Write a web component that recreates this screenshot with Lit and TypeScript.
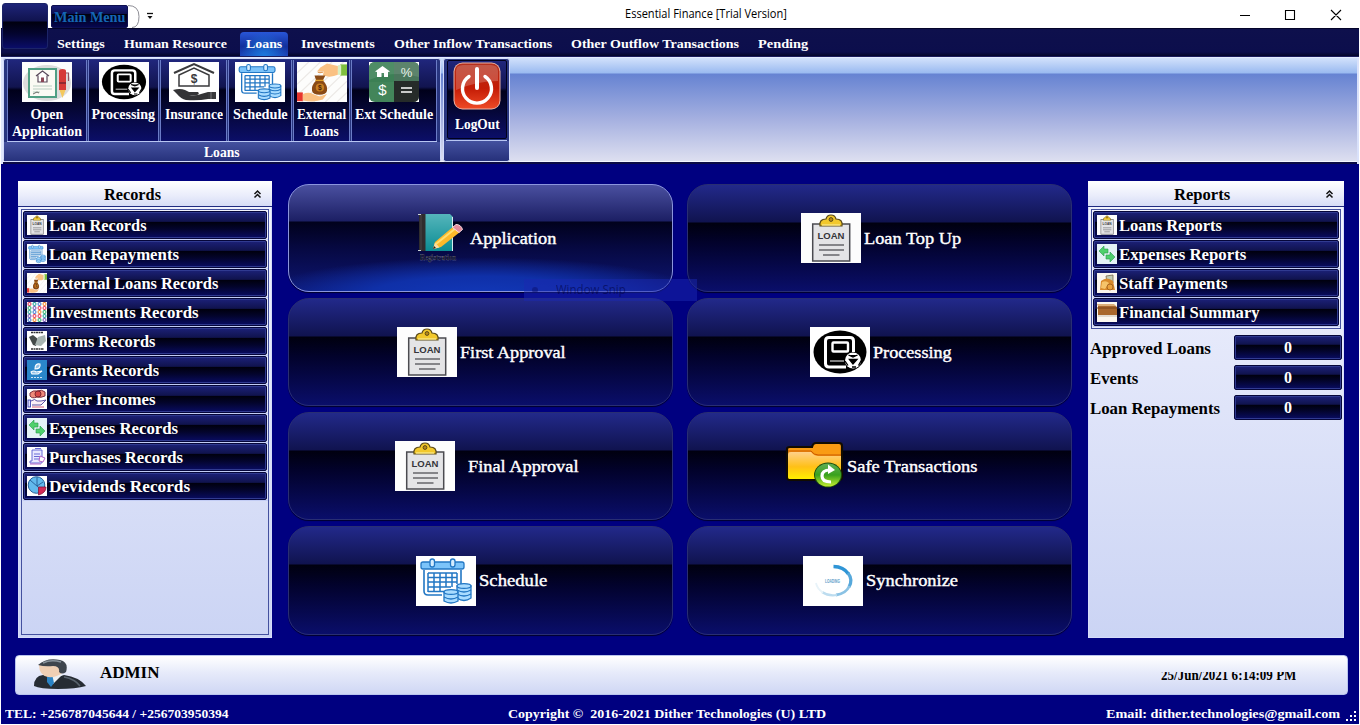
import { LitElement, html, css, svg, nothing } from "lit";
import { customElement, property } from "lit/decorators.js";

/* A line of text stretched horizontally to a given measure. */
@customElement("fit-label")
class FitLabel extends LitElement {
  @property() text = "";
  @property({ type: Number }) w = 0;
  static styles = css`
    :host { display: block; flex: none; white-space: nowrap; }
    .t { display: inline-block; transform-origin: 0 50%; white-space: pre; }
  `;
  render() {
    return html`<span class="t">${this.text}</span>`;
  }
  updated() {
    const t = this.renderRoot.querySelector(".t") as HTMLElement;
    this.style.width = this.w + "px";
    const natural = t.offsetWidth;
    if (natural) t.style.transform = `scaleX(${this.w / natural})`;
  }
}

const calendar = svg`
  <rect width="60" height="50" fill="#fff"/>
  <path d="M8 14V35q0 4 4 4H26M45 14V28" fill="none" stroke="#2277c4" stroke-width="1.6"/>
  <rect x="5" y="6" width="43" height="7" rx="2" fill="#7cc4fa" stroke="#2277c4" stroke-width="1.3"/>
  <rect x="14" y="3" width="4.500" height="8" rx="2.200" fill="#d5edff" stroke="#2277c4" stroke-width="1.300"/>
  <rect x="34.500" y="3" width="4.500" height="8" rx="2.200" fill="#d5edff" stroke="#2277c4" stroke-width="1.300"/>
  <path d="M12 17H41M12 21.500H41M12 26H41M12 31H35M12 35.500H28M12 17V36M18 17V36M24 17V36M30 17V31M36 17V31M41 17V28" stroke="#2277c4" stroke-width="1.500" fill="none"/>
  <g fill="#a9dcff" stroke="#2277c4" stroke-width="1.300">
    <path d="M41 30V42q7 5 14 0V30z"/><ellipse cx="48" cy="30" rx="7" ry="2.400"/>
    <path d="M41 34q7 4 14 0M41 38q7 4 14 0" fill="none"/>
    <path d="M28 36V45q7 4 14 0V36z" /><ellipse cx="35" cy="36" rx="7" ry="2.400"/>
    <path d="M28 41q7 4 14 0" fill="none"/>
  </g>`;

const clip = svg`
  <rect width="60" height="50" fill="#fdfdfd"/>
  <rect x="11.700" y="11" width="37" height="37" fill="#e4e4e6" stroke="#4b4b50" stroke-width="1.500"/>
  <path d="M19 13q-1-7 6-7q1-4 5-4t5 4q7 0 6 7z" fill="#f2c82c" stroke="#5b4a18" stroke-width="1.200"/>
  <path d="M21 12h18" stroke="#fbe98b" stroke-width="1.300"/>
  <circle cx="30" cy="6.500" r="1.900" fill="#b98a16" stroke="#5b4a18" stroke-width="1"/>
  <text x="30" y="26" text-anchor="middle" textLength="27" lengthAdjust="spacingAndGlyphs" font-family="Liberation Sans" font-weight="700" font-size="8.300" fill="#35353a">LOAN</text>
  <path d="M18 32H43M18 37H43M22 42H38.500" stroke="#66666b" stroke-width="1.600"/>`;

const processing = svg`
  <rect width="60" height="50" fill="#fff"/>
  <ellipse cx="30" cy="25" rx="26.500" ry="21.500" fill="#000"/>
  <path d="M36 40H19q-3.500 0-3.500-3.500V14q0-3.500 3.500-3.500H40q3.500 0 3.500 3.500V25" fill="none" stroke="#fff" stroke-width="3"/>
  <rect x="22.500" y="15.500" width="15.500" height="9" rx="1" fill="none" stroke="#fff" stroke-width="2.400"/>
  <path d="M20 34H34" stroke="#fff" stroke-width="1"/>
  <circle cx="43" cy="33.500" r="8" fill="#fff"/>
  <path d="M38.500 28l4.500 2 4.500-2M39.500 32.500l3.500 4.500 4-4.500zM35 34l3 4.500M51.500 33l-3 5.500M42 40h4" stroke="#000" stroke-width="1.300" fill="#000"/>`;

const extLoans = svg`
  <rect width="60" height="50" fill="#fdfdfc"/>
  <path d="M0 14L14 0M0 28L28 0M0 42L42 0M6 50L56 0M20 50L60 10M34 50L60 24M48 50L60 38" stroke="#ece9e6" stroke-width="1.500"/>
  <rect x="52" y="3" width="8" height="14" fill="#7fbf3f"/><rect x="49" y="4" width="4" height="12" fill="#d8efc3"/>
  <path d="M49 5L36 2 28 7 24 12h8l-1 5q10 3 18-1z" fill="#fac183"/>
  <path d="M25 13h6" stroke="#e29d5d" stroke-width="1.500"/>
  <path d="M21 17h13l-3 6q6 6 5 13-1 5-9 5t-9-5q-1-7 5-13z" fill="#8a4a16"/>
  <path d="M22 23h10" stroke="#e2a22c" stroke-width="1.600"/>
  <circle cx="27.500" cy="32" r="5" fill="#c97f20"/>
  <text x="27.500" y="35" font-size="8" text-anchor="middle" font-family="Liberation Sans" font-weight="700" fill="#4c250a">$</text>
  <rect x="0" y="38" width="7" height="11" fill="#e8352c"/>
  <path d="M7 40q7-3 12 0l8 3 9-3-5 7q-10 4-24 1z" fill="#fac183"/>`;

const expenses = svg`
  <rect width="20" height="20" fill="#e4f3f6"/>
  <path d="M2 7l5-5v3h4v4H7v3z" fill="#4fd06c" stroke="#269b4b" stroke-width=".6"/>
  <path d="M18 13l-5-5v3H9v4h4v3z" fill="#4fd06c" stroke="#269b4b" stroke-width=".6"/>`;

const icons: Record<string, [string, unknown]> = {
  calendar: ["0 0 60 50", calendar],
  clip: ["0 0 60 50", clip],
  processing: ["0 0 60 50", processing],
  external: ["0 0 60 50", extLoans],
  expenses: ["0 0 20 20", expenses],
  open: ["0 0 50 40", svg`
    <rect width="50" height="40" fill="#fdfdfd"/>
    <ellipse cx="25" cy="21" rx="24" ry="18" fill="#dcdcdc"/>
    <rect x="7" y="7" width="27" height="28" fill="#fbfaf4" stroke="#4f9f84" stroke-width="2"/>
    <path d="M14 14l6.500-5 6.500 5M16 13.500V20h9V13.500" fill="#fff" stroke="#5a4a5c" stroke-width="1.200"/>
    <rect x="19" y="15.500" width="3" height="4.500" fill="#8a4555"/>
    <path d="M11 24H30M11 27H30M11 30H18" stroke="#a9c4b6" stroke-width=".8"/>
    <path d="M11 32l4-2 2 1" stroke="#333" stroke-width=".7" fill="none"/>
    <path d="M37 9q0-2 3.500-2T44 9V28H37z" fill="#d63a38"/><path d="M44 11h2.500v8" fill="none" stroke="#8f5560" stroke-width="1.200"/>
    <path d="M37 21h7" stroke="#782430" stroke-width="1.500"/><path d="M37.500 28h6l-3 8z" fill="#f4c85c"/>`],
  insurance: ["0 0 50 40", svg`
    <rect width="50" height="40" fill="#fff"/>
    <path d="M5 11L25 2 45 11" fill="none" stroke="#3a3a3c" stroke-width="2"/>
    <path d="M10 24V13L25 6l15 7v11z" fill="none" stroke="#3a3a3c" stroke-width="1.500"/>
    <text x="25" y="21" text-anchor="middle" font-size="12" font-family="Liberation Sans" font-weight="700" fill="#3a3a3c">$</text>
    <path d="M4 28q7-2 12 0l4 2h9q2 2-1 3h-8q8 1 12-1l7-2v7q-10 2-22 1-5-1-9-6z" fill="#343436"/>
    <path d="M39 30h8v7h-8z" fill="#3a3a3c"/><path d="M42 30v7" stroke="#999" stroke-width=".7"/>`],
  calc: ["0 0 50 40", svg`
    <rect width="50" height="40" fill="#fff"/>
    <rect width="50" height="40" rx="6" fill="#43855a"/>
    <path d="M0 6q0-6 6-6H25V20H0z" fill="#3c8055"/><path d="M25 0H44q6 0 6 6V20H25z" fill="#4a765c"/>
    <path d="M25 19H50V34q0 6-6 6H25z" fill="#262b29"/>
    <path d="M0 6q0-6 6-6H44q6 0 6 6V15Q25 8 0 18z" fill="#fff" opacity=".1"/>
    <path d="M6 9.500L13.500 4 21 9.500 19 10V15H15V11H12.500V15H8V10z" fill="#fff"/>
    <text x="37.500" y="14.500" text-anchor="middle" font-size="13" font-weight="400" font-family="Liberation Sans" fill="#e7f1ea">%</text>
    <text x="13.500" y="33" text-anchor="middle" font-size="15" font-weight="400" font-family="Liberation Sans" fill="#fff">$</text>
    <path d="M32 26H43M32 30H43" stroke="#fff" stroke-width="1.600"/>`],
  power: ["0 0 48 48", svg`
    <rect x=".5" y=".5" width="47" height="47" rx="9" fill="#e9b3a6"/>
    <rect x="1.500" y="1.500" width="45" height="45" rx="8" fill="url(#pw)"/>
    <path d="M3 9q0-6 7-6H38q7 0 7 6v10Q24 19 3 28z" fill="#fff" opacity=".2"/>
    <path d="M16 14.500a14.500 14.500 0 1 0 16 0" fill="none" stroke="#fff" stroke-width="3.400" stroke-linecap="round"/>
    <path d="M24 7V26" stroke="#fff" stroke-width="4" stroke-linecap="round"/>
    <defs><linearGradient id="pw" x1="0" x2="0" y1="0" y2="1"><stop offset="0" stop-color="#b5301c"/><stop offset=".55" stop-color="#c41c06"/><stop offset="1" stop-color="#ee4a26"/></linearGradient></defs>`],
  book: ["0 0 60 50", svg`
    <rect x="9" y="1" width="7" height="37" fill="#302d2e"/><path d="M11 1.500v36" stroke="#4b4647" stroke-width="1"/><path d="M8 1.500h3M8 37.500h3" fill="none" stroke="#c9d2d4" stroke-width="1"/>
    <path d="M15.500 1H40l3 3V38H15.500z" fill="url(#bk)"/><path d="M42.500 4V38" stroke="#d6ecee" stroke-width="1"/>
    <path d="M23 36l2-7L44 13l6 6-19 15z" fill="#fdb92a"/><path d="M26 31L46 15" stroke="#ffdf70" stroke-width="2"/>
    <path d="M42.500 14.500l3.500-3q5 0 6.500 5l-3.500 3z" fill="#e68b9b" stroke="#f6d9dd" stroke-width="1"/>
    <path d="M23 36l2-6.500 4.500 5z" fill="#f8dca5"/><path d="M23 36l1-3 2 2z" fill="#222"/>
    <text x="28" y="47" text-anchor="middle" textLength="36" lengthAdjust="spacingAndGlyphs" font-size="9" font-family="Liberation Serif" font-weight="700" fill="#000" stroke="#88a" stroke-width=".25">Registration</text>
    <defs><linearGradient id="bk" x1="0" x2="0" y1="0" y2="1"><stop offset="0" stop-color="#55b5bb"/><stop offset="1" stop-color="#0b8d94"/></linearGradient></defs>`],
  folder: ["0 0 60 50", svg`
    <g stroke="#120c00" stroke-width="2.200"><path d="M3 8q0-2 3-2H28q1-4 4-4H55q3 0 3 3V36q0 3-3 3H6q-3 0-3-3z" fill="#f99b13"/></g>
    <path d="M4 14q0-3 3-3H27q3 4 7 4H57V36q0 2-2 2H6q-2 0-2-2z" fill="url(#fd)"/>
    <path d="M4 10H27q3 4 7 4H57" stroke="#c85600" stroke-width="1" fill="none"/>
    <ellipse cx="44" cy="34" rx="14" ry="12.500" fill="#1d4f0c"/><ellipse cx="44" cy="34" rx="13" ry="11.500" fill="url(#gr)"/>
    <path d="M47 41q-9 0-9-6 0-6 8-6" fill="none" stroke="#fff" stroke-width="3.200"/><path d="M44 23.500l7 5.500-7 4z" fill="#fff"/>
    <defs><linearGradient id="fd" x1="0" x2="0" y1="0" y2="1"><stop offset="0" stop-color="#ffd08a"/><stop offset=".55" stop-color="#ffc016"/><stop offset="1" stop-color="#fff000"/></linearGradient>
    <linearGradient id="gr" x1="0" x2="0" y1="0" y2="1"><stop offset="0" stop-color="#5faf57"/><stop offset=".5" stop-color="#39a11d"/><stop offset="1" stop-color="#c4ee32"/></linearGradient></defs>`],
  loading: ["0 0 60 50", svg`
    <rect width="60" height="50" fill="#fff"/>
    <path d="M30.500 10.500A17.500 14.500 0 0 1 45.500 18" fill="none" stroke="#2f95d6" stroke-width="3.400"/>
    <path d="M45 17A17.500 14.500 0 0 1 46 31" fill="none" stroke="#56a8db" stroke-width="3.200"/>
    <path d="M46.500 30A17.500 14.500 0 0 1 33 39" fill="none" stroke="#8ac2e4" stroke-width="2.800"/>
    <path d="M34 39A17.500 14.500 0 0 1 19 36" fill="none" stroke="#bcdcef" stroke-width="2.200"/>
    <path d="M20 36.500A17.500 14.500 0 0 1 13 27" fill="none" stroke="#e8f3f9" stroke-width="1.800"/>
    <text x="29.500" y="27" text-anchor="middle" textLength="15" lengthAdjust="spacingAndGlyphs" font-size="5" font-family="Liberation Sans" font-weight="700" fill="#5b9cc8">LOADING</text>`],
  invest: ["0 0 20 20", svg`
    <rect width="20" height="20" fill="#fff"/>
    ${[0, 1, 2, 3, 4].map((r) => [0, 1, 2, 3].map((c) => svg`<circle cx=${2.5 + c * 5} cy=${2 + r * 4} r="1.500" fill="none" stroke-width="1.100" stroke=${["#e5405f", "#7a5bb8", "#f08a35", "#2ea6a0", "#e5405f", "#3bb273", "#4a7fd0"][(r * 5 + c * 3) % 7]}/>`))}`],
  forms: ["0 0 20 20", svg`
    <rect width="20" height="20" fill="#fff"/>
    <path d="M4 1.500H16" stroke="#333" stroke-width="1.600" stroke-dasharray="2 .5"/>
    <path d="M2 6l4-2 5 4-2 7-3-1z" fill="#444a49"/><path d="M8 14l3-8 7-2 1 6-5 5z" fill="#a9b5b2"/>
    <path d="M4 18H17" stroke="#333" stroke-width="1.600" stroke-dasharray="2 .5"/>`],
  grants: ["0 0 20 20", svg`
    <rect width="20" height="20" fill="#2a86c9"/>
    <path d="M8 9q6 0 5-5-5-1-5 5zM4 12q3-2 5 0l6-1-4 3H5z" fill="#8fc0e6" stroke="#fff" stroke-width="1.100"/>
    <path d="M4 17.500H16" stroke="#cfe5f5" stroke-width="1" stroke-dasharray="2 1"/>`],
  incomes: ["0 0 20 20", svg`
    <rect width="20" height="20" fill="#fff"/>
    <path d="M3 4q3-3 7-2 5-2 8 1v4q-4 2-8 1-5 2-7-1z" fill="#ef8a7a" stroke="#7e3140" stroke-width="1"/>
    <circle cx="11" cy="5" r="3" fill="#d94848" stroke="#7e2630"/>
    <rect x="1" y="11" width="2.500" height="7" fill="#dfe0ff" stroke="#4347b5" stroke-width=".9"/>
    <path d="M4 12q4-3 6 0h4l5-1-5 5H5" fill="#fbeef6" stroke="#4b3f9a" stroke-width=".9"/><path d="M5 18h12" stroke="#d55b76"/>`],
  purchases: ["0 0 20 20", svg`
    <rect width="20" height="20" fill="#fff"/>
    <path d="M5 3H15V16H3V14H5zM8 1.500h6M7 7h6M7 9.500h6M7 12h5" fill="#e9e9ff" stroke="#5a5bd0" stroke-width=".9"/>
    <path d="M3 17H14M13 9l5 2-2 4-4-1z" fill="#fff" stroke="#b465c8" stroke-width="1"/>`],
  pie: ["0 0 20 20", svg`
    <rect width="20" height="20" fill="#fff"/>
    <circle cx="9.500" cy="9" r="8.300" fill="#62b9ec" stroke="#235c94" stroke-width="1"/>
    <path d="M3 4L11 11M10 1V10L16 6" stroke="#235c94" stroke-width=".9" fill="none"/>
    <path d="M11.500 11h7.500q0 6-7.500 8z" fill="#d32b57" stroke="#85183a" stroke-width=".8"/>`],
  staff: ["0 0 20 20", svg`
    <rect width="20" height="20" fill="#fbf6ee"/>
    <path d="M9 3l7-1v8H10z" fill="#c3cbb4" stroke="#7c6a4c" stroke-width=".8"/>
    <path d="M4 8q6-5 12 0l2 9H3z" fill="#d98a2b"/><path d="M5 9q4-2 7 1l-4 6-4-1z" fill="#f6c46a"/><circle cx="13" cy="14" r="3" fill="#eaa13c" stroke="#99591a" stroke-width=".8"/>`],
  box: ["0 0 20 20", svg`
    <rect width="20" height="20" fill="#fbf7f0"/>
    <path d="M1 3H17l3 2V13H1z" fill="#a9672c"/><path d="M0 2H17l2 2H1z" fill="#dcae78"/><path d="M0 6H20" stroke="#7a4317" stroke-width="1"/><path d="M1 14H20" stroke="#c9bdb0" stroke-width="1"/>`],
  user: ["0 0 54 30", svg`
    <path d="M1 27Q1 17 10 16l12 3 9-3q15 2 22 11-10 3-28 3-18 0-24-3z" fill="#262c33"/>
    <path d="M12 15l8 10 10-10-8-2z" fill="#eceff2"/><path d="M14 16l5-1 2 9-3 4-4-5z" fill="#2a83c4"/>
    <path d="M6 6q10-6 22-2 5 5 1 10-6 5-14 4-9-2-9-12z" fill="#efcfb4"/>
    <path d="M5 6Q14-2 27 1q9 2 6 12-4 3-7 0 1-6-6-6-8 1-15-1z" fill="#3e454d"/>
    <path d="M10 4q8-4 18-1" stroke="#88929b" stroke-width="1.500" fill="none"/>
    <path d="M31 18q11 2 16 9" stroke="#59636d" stroke-width="1.500" fill="none"/>`],
};

const icon = (name: string, cls: string) =>
  html`<svg class=${cls} viewBox=${icons[name][0]} preserveAspectRatio="none">${icons[name][1]}</svg>`;

type Row = [string, string, number];

const tabs: [string, number][] = [
  ["Settings", 48], ["Human Resource", 103], ["Loans", 36], ["Investments", 74],
  ["Other Inflow Transactions", 158], ["Other Outflow Transactions", 168], ["Pending", 50],
];
const ribbon: [string, string, [string, number][]][] = [
  ["open", "b1", [["Open", 33], ["Application", 70]]],
  ["processing", "b2", [["Processing", 64]]],
  ["insurance", "b3", [["Insurance", 58]]],
  ["calendar", "b4", [["Schedule", 55]]],
  ["external", "b5", [["External", 49], ["Loans", 35]]],
  ["calc", "b6", [["Ext Schedule", 78]]],
];
const records: Row[] = [
  ["clip", "Loan Records", 98], ["calendar", "Loan Repayments", 130], ["external", "External Loans Records", 169],
  ["invest", "Investments Records", 150], ["forms", "Forms Records", 106], ["grants", "Grants Records", 110],
  ["incomes", "Other Incomes", 106], ["expenses", "Expenses Records", 129], ["purchases", "Purchases Records", 134],
  ["pie", "Devidends Records", 141],
];
const reports: Row[] = [
  ["clip", "Loans Reports", 103], ["expenses", "Expenses Reports", 127],
  ["staff", "Staff Payments", 109], ["box", "Financial Summary", 141],
];
const counters: [string, number][] = [["Approved Loans", 121], ["Events", 48], ["Loan Repayments", 130]];
const tiles: [string, string, number, string][] = [
  ["book", "Application", 86, "tile hot"], ["clip", "Loan Top Up", 97, "tile"],
  ["clip", "First Approval", 106, "tile"], ["processing", "Processing", 79, "tile"],
  ["clip", "Final Approval", 110, "tile wide"], ["folder", "Safe Transactions", 130, "tile"],
  ["calendar", "Schedule", 68, "tile"], ["loading", "Synchronize", 92, "tile"],
];

@customElement("app-root")
class AppRoot extends LitElement {
  static styles = css`
    :host { display: block; box-sizing: border-box; width: 1360px; height: 725px; overflow: hidden; background: #fff;
      position: relative; font: bold 14px/17px "Palatino Linotype", "Book Antiqua", "Liberation Serif", serif; color: #fff; }
    * { box-sizing: border-box; }
    svg { display: block; flex: none; }
    .win { display: flex; flex-direction: column; height: 724px; margin: 0 1px; background: #000080; }

    .titlebar { height: 28px; flex: none; background: #fff; display: flex; align-items: flex-start; }
    .qat { display: flex; margin: 5px 0 0 50px; height: 23px; width: 77px; padding: 3px 0 0 2px; border: 1px solid #0e1050; border-radius: 2px;
      background: linear-gradient(#1a1e78, #0c0f4e 38%, #00000f 40%, #060750); color: #1467b4; font-size: 15px; }
    .qarc { width: 26px; height: 28px; }
    .caption { margin: 6px 0 0 471px; color: #000; font: 12px/16px "Open Sans", "Noto Sans", sans-serif; }
    .ctl { margin-left: 453px; width: 104px; height: 28px; }

    .tabs { height: 28px; flex: none; display: flex; align-items: flex-end; padding-left: 50px; gap: 7px;
      background: linear-gradient(#0e104c, #0c0e4c 85%, #04052a); border-top: 1px solid #04042a; }
    .tab { height: 24px; padding: 3px 6px 0; font-size: 13.500px; }
    .tab.on { border-radius: 4px 4px 0 0; background: radial-gradient(ellipse at 50% 110%, #1b7fe0, transparent 70%), linear-gradient(#2856d8, #12309c 60%, #1b46bb); }

    .ribbon { height: 108px; flex: none; display: flex; gap: 2px; padding: 1px 0 0 2px; align-items: flex-start;
      border: solid #1a1c5c; border-width: 1px 0 0; box-shadow: inset 0 1px #e4ebff, inset 2px 0 #dfe6fc, inset -2px 0 #d9e1fa, inset 0 -2px #0b0b45, inset 0 -3px #f4f6ff;
      background: linear-gradient(#d6e4fc 0, #9abaf0 16px, #6683d2 17px, #a5b0e0 62px, #dddff0 104px); }
    .group { height: 104px; border: 1px solid #d3dcfb; border-radius: 3px; background: #28357f;
      display: flex; flex-direction: column; padding: 1px 3px 0 3px; }
    .btns { display: flex; gap: 1px; height: 82px; border-bottom: 1px solid #b8c6f3; }
    .btn { height: 81px; display: flex; flex-direction: column; align-items: center; padding-top: 2px; border: solid #6b7cc6; border-width: 0 1px; outline: 0;
      background: linear-gradient(#20267c, #11144f 27px, #00001a 30px, #04052e 45px, #0b0e68); }
    .btn svg { width: 50px; height: 40px; margin-bottom: 4px; }
    .b1 { width: 80px; } .b2 { width: 71px; } .b3 { width: 67px; } .b4 { width: 64px; } .b5 { width: 57px; } .b6 { width: 86px; }
    .cap { display: flex; justify-content: center; padding-top: 2px; height: 19px; margin: 0 -3px; background: linear-gradient(#44519f, #27327c); }
    .out { width: 67px; padding: 1px 2px; }
    .out .cap { margin: 0 -2px; }
    .out .btn { width: 60px; height: 79px; margin-left: 1px; border: 1px solid #00001c; border-radius: 2px; padding-top: 1px; }
    .out .btn svg { width: 48px; height: 48px; margin-bottom: 6px; }

    .main { flex: none; display: flex; align-items: flex-start; padding: 17px 14px 0 17px; height: 491px; }
    .panel { width: 254px; height: 457px; background: linear-gradient(#f3f4fe, #cbd4f4); border: 1px solid #d5dcfa; border-top: 0; color: #000; display: flex; flex-direction: column; }
    .head { height: 26px; flex: none; margin: 0 -1px; background: linear-gradient(#fff, #e9ecfb 60%, #d6dcf5); border-bottom: 1px solid #202b80; display: flex; align-items: center; justify-content: space-between; font-size: 16px; padding: 2px 10px 0 86px; }
    .head svg { width: 9px; height: 10px; margin-top: -2px; }
    .inset { margin: 2px 2px 2px; border: 1px solid #44519f; padding: 1px 0 0 1px; flex: 1; }
    .item { height: 29px; border: 1px solid #c3cdf5; border-width: 0 0 1px; padding-right: 1px; }
    .face { height: 28px; display: flex; align-items: center; color: #fff; font-size: 16px; padding-left: 3px; gap: 2px; border: 1px solid #05063a; border-radius: 2px;
      box-shadow: inset 0 0 0 1px #303a90;
      background: linear-gradient(#1c2178, #10134e 36%, #00000f 40%, #03042c 65%, #090c62); }
    .face svg { width: 20px; height: 20px; }
    .right { width: 256px; margin-left: 16px; }
    .right .inset { flex: none; height: 120px; margin: 2px 2px 6px; }
    .cnt { display: flex; justify-content: space-between; align-items: center; height: 24px; margin: 0 1px 6px 1px; font-size: 16px; }
    .cnt fit-label { padding-top: 2px; }
    .num { width: 108px; height: 25px; display: flex; align-items: center; justify-content: center; color: #fff; border: 1px solid #05063a; border-radius: 2px; box-shadow: inset 0 0 0 1px #303a90;
      background: linear-gradient(#1c2178, #10134e 36%, #00000f 40%, #03042c 65%, #090c62); }

    .grid { display: grid; grid-template-columns: 385px 385px; grid-template-rows: 108px 108px 108px 109px; column-gap: 14px; row-gap: 6px; margin: 3px 0 0 16px; }
    .tile { border-radius: 21px; border: 1px solid #292e72; box-shadow: 0 1px 1px #00002c; display: flex; align-items: center; justify-content: center; gap: 3px; padding-left: 2px;
      font-size: 17px; font-weight: 400; -webkit-text-stroke: .4px #fff;
      background: linear-gradient(#22298a, #10134f 37px, #00000f 38px, #02022c 58px, #0a0e6a); }
    .tile svg { width: 60px; height: 50px; -webkit-text-stroke: 0; }
    .tile.hot { border-color: #8b95dd; gap: 0; padding-left: 4px;
      background: radial-gradient(ellipse 58% 38px at 50% 104%, #1238b8, #0f30a8 50%, transparent), linear-gradient(#4a50a0, #1c1f64 36px, #01011c 37px, #060840 62px, #0d1672); }
    .tile.wide { gap: 13px; padding-left: 12px; }

    .status { flex: none; height: 40px; margin: 0 11px 0 14px; border-radius: 4px; background: linear-gradient(#fff, #e6eafa 45%, #cfd7f4); border: 1px solid #b9c4ee; display: flex; align-items: center; color: #000; font-size: 17px; }
    .avatar { width: 54px; height: 30px; margin-left: 17px; margin-top: -3px; }
    .admin { margin: -5px 0 0 13px; }
    .clock { margin: 2px 51px 0 auto; height: 8px; overflow: hidden; font-size: 14px; line-height: 8px; display: flex; align-items: center; }
    .foot { flex: 1; display: flex; align-items: flex-start; padding: 10px 0 0 4px; font-size: 13px; }
    .foot .c { margin-left: 279px; } .foot .e { margin-left: 280px; }
    .grip { width: 12px; height: 12px; margin: 5px 0 0 6px; }

    .orb { position: absolute; left: 2px; top: 3px; width: 46px; height: 46px; border: 1px solid #1c2468; border-radius: 3px; background: linear-gradient(#1e2478, #10134e 17px, #00000f 18px, #030430 30px, #0a0d68); }
    .snip { position: absolute; left: 524px; top: 279px; width: 173px; height: 22px; background: rgba(25, 40, 175, .5); color: rgba(0, 0, 60, .55); font: 12px/22px "Open Sans", sans-serif; display: flex; padding-left: 32px; }
    .snip::before { content: ""; position: absolute; left: 8px; top: 8px; width: 6px; height: 6px; border-radius: 50%; background: rgba(10, 15, 110, .5); }
  `;

  private list(rows: Row[]) {
    return rows.map(([i, t, w]) => html`<div class="item"><div class="face">${icon(i, "ic")}<fit-label text=${t} w=${w}></fit-label></div></div>`);
  }
  private head(t: string, w: number) {
    return html`<div class="head"><fit-label text=${t} w=${w}></fit-label>
      <svg viewBox="0 0 9 10"><path d="M1.500 5l3-3 3 3M1.500 8.500l3-3 3 3" fill="none" stroke="#111" stroke-width="1.500"/></svg></div>`;
  }

  render() {
    return html`
      <div class="win">
        <div class="titlebar">
          <div class="qat"><fit-label text="Main Menu" w="71"></fit-label></div>
          <svg class="qarc" viewBox="0 0 26 28"><path d="M0 5.500q11 0 11 11t-7 11" fill="none" stroke="#8d8d95"/><path d="M19 13.500h6" stroke="#111" stroke-width="1.300"/><path d="M19.500 16h5l-2.500 3z" fill="#111"/></svg>
          <div class="caption"><fit-label text="Essential Finance [Trial Version]" w="162"></fit-label></div>
          <svg class="ctl" viewBox="0 0 104 28"><path d="M0 15.500h10M45.500 10.500h9v9h-9zM91 10l10 10M101 10L91 20" fill="none" stroke="#000" stroke-width="1.100"/></svg>
        </div>
        <div class="tabs">${tabs.map(([t, w]) => html`<div class=${t === "Loans" ? "tab on" : "tab"}><fit-label text=${t} w=${w}></fit-label></div>`)}</div>
        <div class="ribbon">
          <div class="group">
            <div class="btns">${ribbon.map(([i, c, l]) => html`<div class="btn ${c}">${icon(i, "ic")}${l.map(([t, w]) => html`<fit-label text=${t} w=${w}></fit-label>`)}</div>`)}</div>
            <div class="cap"><fit-label text="Loans" w="36"></fit-label></div>
          </div>
          <div class="group out">
            <div class="btns"><div class="btn">${icon("power", "ic")}<fit-label text="LogOut" w="45"></fit-label></div></div>
            <div class="cap">${nothing}</div>
          </div>
        </div>
        <div class="main">
          <div class="panel">${this.head("Records", 57)}<div class="inset">${this.list(records)}</div></div>
          <div class="grid">${tiles.map(([i, t, w, c]) => html`<div class=${c}>${icon(i, "ic")}<fit-label text=${t} w=${w}></fit-label></div>`)}</div>
          <div class="panel right">${this.head("Reports", 56)}<div class="inset">${this.list(reports)}</div>
            ${counters.map(([t, w]) => html`<div class="cnt"><fit-label text=${t} w=${w}></fit-label><div class="num">0</div></div>`)}
          </div>
        </div>
        <div class="status">${icon("user", "avatar")}<fit-label class="admin" text="ADMIN" w="60"></fit-label>
          <div class="clock"><fit-label text="25/Jun/2021 6:14:09 PM" w="135"></fit-label></div></div>
        <div class="foot">
          <fit-label text="TEL: +256787045644 / +256703950394" w="224"></fit-label>
          <fit-label class="c" text="Copyright ©  2016-2021 Dither Technologies (U) LTD" w="318"></fit-label>
          <fit-label class="e" text="Email: dither.technologies@gmail.com" w="234"></fit-label>
          <svg class="grip" viewBox="0 0 12 12"><path d="M8 1h2v2H8zM4 5h2v2H4zM8 5h2v2H8zM0 9h2v2H0zM4 9h2v2H4zM8 9h2v2H8z" fill="#fff"/></svg>
        </div>
      </div>
      <div class="orb"></div>
      <div class="snip"><fit-label text="Window Snip" w="70"></fit-label></div>`;
  }
}
